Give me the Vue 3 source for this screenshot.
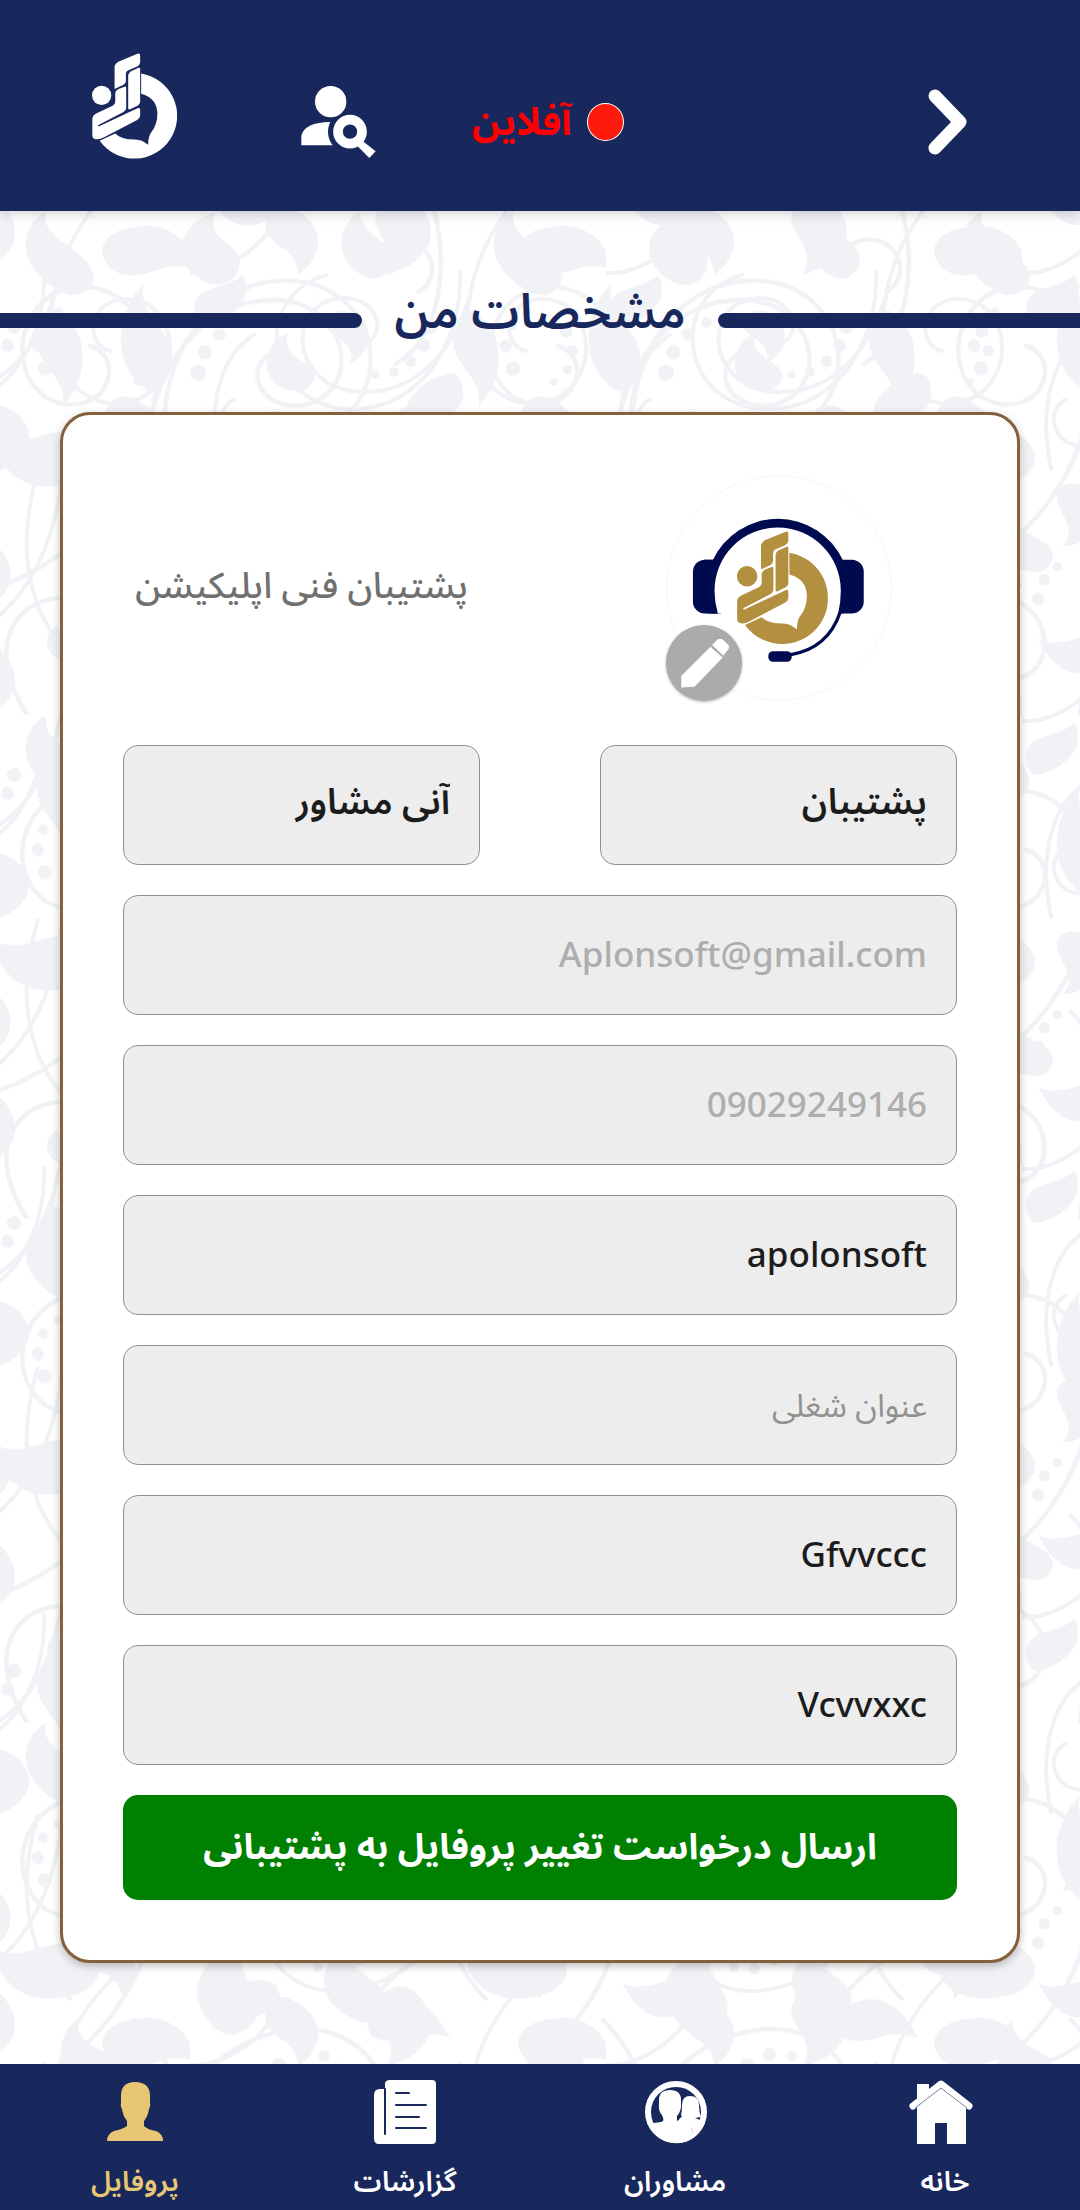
<script setup>
import { ref } from 'vue'

const firstName = ref('پشتیبان')
const lastName = ref('آنی مشاور')
const fields = ref([
  { id: 'email', label: 'ایمیل', type: 'email', value: 'Aplonsoft@gmail.com', disabled: true },
  { id: 'phone', label: 'شماره همراه', type: 'tel', value: '09029249146', disabled: true },
  { id: 'username', label: 'نام کاربری', type: 'text', value: 'apolonsoft' },
  { id: 'job', label: 'عنوان شغلی', type: 'text', value: '', placeholder: 'عنوان شغلی' },
  { id: 'education', label: 'تحصیلات', type: 'text', value: 'Gfvvccc' },
  { id: 'about', label: 'درباره من', type: 'text', value: 'Vcvvxxc' },
])
</script>

<template>
  <div class="page">
    <svg class="defs" width="0" height="0" aria-hidden="true">
      <symbol id="brand" viewBox="95 70 256 318">
        <circle cx="124" cy="197" r="29" />
        <path d="M163 110Q165 101 174 96L232 72Q240 69 240 78V98Q239 106 231 110L203 122Q197 125 197 132V155Q196 161 190 165L163 178Z" />
        <path d="M204 137Q205 128 213 124L235 114Q240 112 240 118V217Q239 224 232 228L210 239Q204 241 204 235Z" />
        <path d="M165 189Q167 181 175 178L193 171Q198 169 198 175V235Q198 242 190 247L113 287L115 291L232 236Q240 232 240 240V258Q239 267 231 271L130 324Q118 331 106 329Q96 327 96 317V266Q97 257 106 252L157 228Q165 224 165 216Z" />
        <path d="M243 131A129 129 0 1 1 118 334L165 312Q180 326 205 329Q232 328 245 334Q256 340 264 346Q264 320 275 306Q292 285 292 250Q290 205 243 192Z" />
      </symbol>
    </svg>

    <header class="topbar">
      <svg class="logo" aria-hidden="true"><use href="#brand" /></svg>
      <div class="tools">
        <button class="icon-btn search" aria-label="جستجوی مشاور">
          <svg viewBox="723 176 223 216" width="75" height="72" fill="#fff" aria-hidden="true">
            <circle cx="811" cy="223" r="47" />
            <path d="M723 354V325Q733 285 810 284A66 66 0 0 0 817 354Z" />
            <circle cx="869" cy="313" r="36" fill="none" stroke="#fff" stroke-width="29" />
            <path d="M902 337L946 372L927 392L889 354Z" />
          </svg>
        </button>
        <div class="status">
          <span>آفلاین</span>
          <i class="dot"></i>
        </div>
        <button class="icon-btn next" aria-label="بازگشت">
          <svg viewBox="0 0 40 66" width="40" height="66" aria-hidden="true">
            <path d="M7 7L32 33L7 59" fill="none" stroke="#fff" stroke-width="13" stroke-linecap="round" stroke-linejoin="round" />
          </svg>
        </button>
      </div>
    </header>

    <main class="content">
      <svg class="pattern" aria-hidden="true">
        <defs>
          <pattern id="damask" width="520" height="560" patternUnits="userSpaceOnUse" patternTransform="scale(0.9)">
            <g id="swirl">
              <g fill="none" stroke="#f1f2f6" stroke-width="5" stroke-linecap="round">
                <path d="M-10 420C60 400 150 330 170 220C190 110 110 60 55 95C5 130 20 215 80 215C125 215 135 160 100 150" />
                <path d="M170 220C190 150 240 90 320 100C390 112 400 200 340 215C290 225 270 175 300 160" />
                <path d="M182 250C180 150 240 70 330 78C430 90 440 220 350 245" />
                <path d="M160 560C170 440 230 350 330 340C430 335 460 450 390 480C330 500 300 440 340 420" />
                <path d="M150 330C200 380 220 460 190 560M400 330C440 260 500 240 530 250" />
                <path d="M30 560C-20 480 20 430 70 430C130 430 140 520 80 520" />
                <path d="M420 40C470 10 500 70 465 90M440 170C490 140 500 60 480 -10" />
              </g>
              <g fill="#f1f2f6">
                <path d="M60 85C20 60 20 20 50 0C45 35 100 40 105 75C95 100 75 95 60 85Z" />
                <path d="M165 200C120 170 130 110 160 80C150 120 200 130 190 175C185 195 175 200 165 200Z" />
                <path d="M90 300C30 320 0 290 -10 250C30 270 60 230 95 250C120 270 110 290 90 300Z" />
                <path d="M230 80C190 60 190 20 240 0C225 40 275 30 265 65C260 80 245 85 230 80Z" />
                <path d="M330 200C290 200 285 150 320 135C310 165 350 165 350 185C345 195 340 200 330 200Z" />
                <path d="M240 340C200 300 220 260 275 245C250 285 310 300 280 335C265 350 250 348 240 340Z" />
                <path d="M395 330C350 310 350 270 385 245C385 285 435 280 425 315C420 335 405 335 395 330Z" />
                <path d="M405 325C450 290 480 310 500 350C465 335 445 365 412 348Z" />
                <path d="M100 400C60 390 60 350 85 330C85 365 130 360 130 385C125 400 115 404 100 400Z" />
                <path d="M250 470C210 450 220 400 260 385C245 425 290 430 285 455C275 475 265 475 250 470Z" />
                <path d="M440 540C400 520 420 470 470 465C445 495 485 510 475 535C465 548 450 546 440 540Z" />
                <path d="M400 70C370 50 375 15 400 0C400 30 440 30 435 60C425 78 412 78 400 70Z" />
                <path d="M500 180C460 190 440 220 455 245C475 225 510 235 515 205C515 190 510 180 500 180Z" />
                <path d="M70 500C50 495 45 470 65 460C62 478 90 475 90 490C85 502 80 503 70 500Z" />
                <circle cx="220" cy="180" r="9" /><circle cx="228" cy="157" r="8" /><circle cx="244" cy="137" r="7" /><circle cx="265" cy="124" r="6" /><circle cx="288" cy="120" r="5" />
                <circle cx="50" cy="175" r="8" /><circle cx="42" cy="150" r="7" /><circle cx="48" cy="127" r="6" /><circle cx="65" cy="112" r="5" />
                <circle cx="310" cy="380" r="8" /><circle cx="335" cy="368" r="7" /><circle cx="360" cy="370" r="6" /><circle cx="381" cy="383" r="5" />
                <circle cx="500" cy="400" r="8" /><circle cx="492" cy="424" r="7" /><circle cx="476" cy="441" r="6" />
              </g>
            </g>
          </pattern>
          <pattern id="damask-back" width="520" height="560" patternUnits="userSpaceOnUse" patternTransform="translate(190 260) rotate(180) scale(0.8)">
            <use href="#swirl" />
          </pattern>
        </defs>
        <rect width="100%" height="100%" fill="url(#damask-back)" />
        <rect width="100%" height="100%" fill="url(#damask)" />
      </svg>

      <h1 class="title"><span>مشخصات من</span></h1>

      <form class="card" @submit.prevent>
        <div class="pair">
          <div class="avatar">
            <svg viewBox="135 42 680 680" aria-hidden="true">
              <circle cx="475" cy="382" r="338" fill="#fff" stroke="#f6f6f6" stroke-width="3" />
              <g fill="#000b4f">
                <rect x="216" y="297" width="100" height="162" rx="36" />
                <path d="M250 297H300V459H260Z" />
                <rect x="630" y="297" width="100" height="162" rx="36" />
                <path d="M275 300A216 216 0 0 1 668 300V459H275Z" />
              </g>
              <path d="M281 390A190 190 0 0 1 661 390Q661 425 653 459L600 600H300V459H291Q281 425 281 390Z" fill="#fff" />
              <path d="M659 455Q622 565 508 583" fill="none" stroke="#000b4f" stroke-width="10" />
              <rect x="443" y="572" width="70" height="32" rx="14" fill="#000b4f" />
              <use href="#brand" x="348" y="210" width="274" height="342" fill="#b38f40" />
            </svg>
            <button type="button" class="edit" aria-label="ویرایش تصویر">
              <svg viewBox="138 495 224 224" aria-hidden="true" fill="#fff">
                <path d="M183 645L269 559L305 591L222 677L183 679Z" />
                <path d="M274 554L290 538Q298 532 307 539L321 553Q327 561 320 569L307 586Z" />
              </svg>
            </button>
          </div>
          <p class="role">پشتیبان فنی اپلیکیشن</p>
        </div>

        <div class="pair">
          <input v-model="firstName" class="field name" type="text" aria-label="نام" />
          <input v-model="lastName" class="field name" type="text" aria-label="نام خانوادگی" />
        </div>
        <input
          v-for="f in fields"
          :id="f.id"
          :key="f.id"
          v-model="f.value"
          class="field"
          :type="f.type"
          :placeholder="f.placeholder"
          :disabled="f.disabled"
          :aria-label="f.label"
        />
        <button class="submit">ارسال درخواست تغییر پروفایل به پشتیبانی</button>
      </form>
    </main>

    <nav class="tabs">
      <a href="#home">
        <svg viewBox="4 0 64 64" aria-hidden="true" fill="#fff">
          <path d="M8 4H20V12L8 22Z" />
          <path d="M4 26L32 4L60 26" fill="none" stroke="#fff" stroke-width="7" stroke-linecap="round" stroke-linejoin="round" />
          <path d="M8 27L32 8L57 27V64H38V43H26V64H8Z" />
          <path d="M6 28L32 8L58 28" fill="none" stroke="#7d86a5" stroke-width="1" />
        </svg>
        <span>خانه</span>
      </a>
      <a href="#advisors">
        <svg viewBox="0 0 64 64" aria-hidden="true">
          <circle cx="33" cy="32" r="28" fill="#18285c" stroke="#fff" stroke-width="6" />
          <path d="M5 43Q17 43 20 41Q21 39 19 35Q15 31 16 24V20Q16 10 27 10Q38 10 38 20V27Q37 33 34 36V41Q36 41 37 38Q40 37 38 35Q39 31 39 25Q39 16 47 16Q56 16 56 25Q56 32 58 37L52 38L62 42A30 30 0 0 1 5 43Z" fill="#fff" />
          <path d="M48 47L50 53" stroke="#d5d8e2" stroke-width="1" />
        </svg>
        <span>مشاوران</span>
      </a>
      <a href="#reports">
        <svg viewBox="0 0 64 64" aria-hidden="true">
          <path d="M17 0H59Q63 0 63 4V60Q63 64 59 64H6Q1 64 1 58V15Q1 9 7 9H12V4Q12 0 17 0Z" fill="#fff" />
          <path d="M12 9V54M23 13H36M23 25H53M23 37H46M23 48H53" stroke="#18285c" stroke-width="2" stroke-linecap="round" fill="none" />
        </svg>
        <span>گزارشات</span>
      </a>
      <a href="#profile" class="active" aria-current="page">
        <svg viewBox="0 0 64 64" aria-hidden="true">
          <path d="M32 2Q47 2 47 16V22Q48 26 46 29Q45 36 41 41V46Q45 50 53 51Q60 54 60 61H4Q4 54 11 51Q20 49 24 46V41Q20 36 19 29Q17 26 18 22V16Q18 2 32 2Z" fill="#e7c674" />
        </svg>
        <span>پروفایل</span>
      </a>
    </nav>
  </div>
</template>

<style>
body {
  margin: 0;
}
</style>

<style scoped>
.page {
  display: flex;
  flex-direction: column;
  min-height: 100vh;
  direction: rtl;
  background: #fff;
  font-family: "Noto Sans", "Noto Sans Arabic", "DejaVu Sans", sans-serif;
}
.page * {
  box-sizing: border-box;
}
.defs {
  position: absolute;
}
button {
  border: 0;
  padding: 0;
  font-family: inherit;
}
svg {
  display: block;
  overflow: visible;
}
.topbar {
  direction: ltr;
  display: flex;
  align-items: center;
  height: 211px;
  padding: 0 112px 0 92px;
  background: #18285c;
  box-shadow: 0 2px 12px rgba(0, 0, 0, 0.2);
  position: relative;
  z-index: 1;
}
.logo {
  width: 85px;
  height: 106px;
  fill: #fff;
}
.tools {
  flex: 1;
  display: flex;
  align-items: center;
  padding-top: 32px;
  padding-left: 124px;
}
.icon-btn {
  background: none;
}
.status {
  direction: ltr;
  display: flex;
  align-items: center;
  gap: 15px;
  margin-left: 96px;
  color: #f00;
  font-size: 38px;
  line-height: 60px;
  font-weight: 700;
}
.status span {
  padding-bottom: 4px;
}
.dot {
  width: 37px;
  height: 38px;
  border: 1px solid #fff;
  border-radius: 50%;
  background: #ff1a0e;
}
.next {
  margin-left: auto;
}
.content {
  position: relative;
  flex: 1;
  padding-bottom: 101px;
}
.pattern {
  position: absolute;
  inset: 0;
  width: 100%;
  height: 100%;
  overflow: hidden;
}
.title {
  position: relative;
  display: flex;
  align-items: center;
  gap: 32px;
  height: 72px;
  margin: 73px 0 56px;
  color: #18285c;
  font-size: 48px;
  font-weight: 600;
  line-height: 72px;
}
.title span {
  padding-bottom: 20px;
}
.title::before,
.title::after {
  content: "";
  flex: 1;
  height: 15px;
  background: #18285c;
}
.title::before {
  border-radius: 8px 0 0 8px;
}
.title::after {
  border-radius: 0 8px 8px 0;
}
.card {
  position: relative;
  display: flex;
  flex-direction: column;
  gap: 30px;
  margin: 0 60px;
  padding: 60px;
  border: 3px solid #85603c;
  border-radius: 30px;
  background: #fff;
  box-shadow: 0 3px 9px rgba(0, 0, 0, 0.25);
}
.pair {
  display: grid;
  grid-template-columns: 1fr 1fr;
  gap: 120px;
  align-items: center;
}
.pair:first-child {
  margin-bottom: 14px;
}
.avatar {
  position: relative;
  width: 226px;
  height: 226px;
  margin: 0 auto;
}
.edit {
  position: absolute;
  left: 0;
  bottom: 0;
  width: 76px;
  height: 76px;
  border-radius: 50%;
  background: #ababab;
  box-shadow: 0 1px 3px rgba(0, 0, 0, 0.3);
}
.role {
  margin: 0;
  padding-bottom: 6px;
  color: #707070;
  font-size: 36px;
  font-weight: 500;
  line-height: 60px;
  text-align: center;
  white-space: nowrap;
}
.field {
  width: 100%;
  height: 120px;
  padding: 0 29px 4px;
  border: 1px solid #909090;
  border-radius: 15px;
  background: #ededed;
  color: #1c1c1c;
  font-family: inherit;
  font-size: 35px;
  font-weight: 500;
  direction: rtl;
  text-align: right;
}
.name {
  font-size: 36px;
  font-weight: 600;
}
.field:disabled {
  color: #aeaeae;
  opacity: 1;
}
.field::placeholder {
  color: #919191;
  font-size: 32px;
  font-weight: 400;
  opacity: 1;
}
.submit {
  height: 105px;
  border-radius: 15px;
  background: #008000;
  color: #fff;
  font-size: 36px;
  font-weight: 700;
}
.tabs {
  position: relative;
  display: grid;
  grid-template-columns: repeat(4, 1fr);
  height: 146px;
  padding-top: 16px;
  background: #18285c;
}
.tabs a {
  display: flex;
  flex-direction: column;
  align-items: center;
  gap: 16px;
  color: #fff;
  font-size: 28px;
  font-weight: 600;
  line-height: 40px;
  text-decoration: none;
}
.tabs svg {
  width: 64px;
  height: 64px;
}
.tabs .active {
  color: #e7c674;
}
</style>
